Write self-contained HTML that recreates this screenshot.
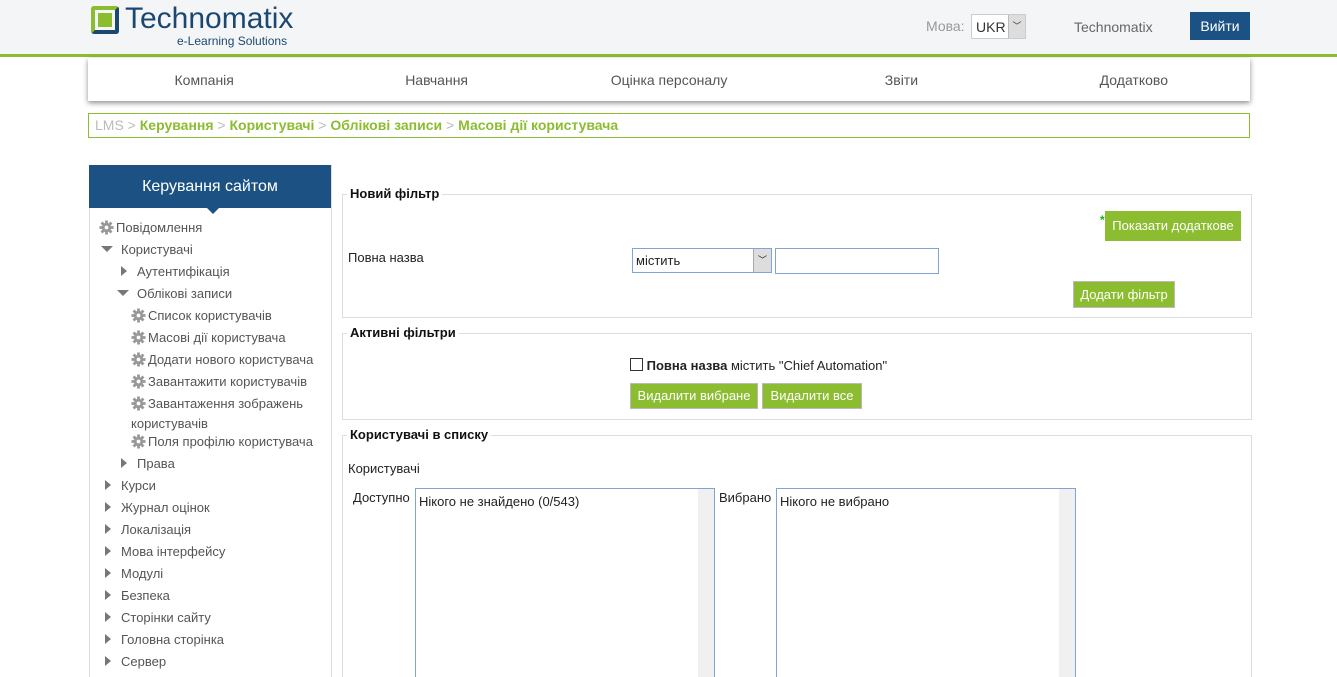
<!DOCTYPE html>
<html><head><meta charset="utf-8"><style>
*{box-sizing:border-box;margin:0;padding:0}
html,body{width:1337px;height:677px;overflow:hidden}
body{background:#fff;font-family:"Liberation Sans",Arial,sans-serif;font-size:13px;color:#222;position:relative}
.a{position:absolute}
.hdr{left:0;top:0;width:1337px;background:#f4f5f7;border-bottom:3px solid #8cbd31;height:57px}
.nav{left:88px;top:58px;width:1162px;height:43px;background:#fff;box-shadow:0 2px 5px rgba(0,0,0,.45);display:flex;align-items:center;font-size:14px;color:#555}
.nav span{flex:1;text-align:center}
.bc{left:88px;top:113px;width:1162px;height:25px;border:1px solid #8cbd31;padding:3px 6px;font-size:14px;color:#bbb}
.bc b{color:#8cbd31}
.side{left:89px;top:165px;width:243px;height:520px;border:1px solid #ddd}
.sh{left:89px;top:165px;width:242px;height:43px;background:#1b5283;color:#fff;font-size:16px;text-align:center;line-height:43px}
.sh:after{content:"";position:absolute;left:118px;bottom:-6px;border:6px solid transparent;border-top-color:#1b5283;border-bottom:0}
.it{position:absolute;font-size:13px;color:#555;white-space:nowrap}
.g{display:inline-block;width:15px;height:15px;vertical-align:-3px;margin-right:2px}
.tr{display:inline-block;width:0;height:0;border-left:6px solid #777;border-top:5px solid transparent;border-bottom:5px solid transparent;margin-right:10px}
.td{display:inline-block;width:0;height:0;border-top:6px solid #777;border-left:6px solid transparent;border-right:6px solid transparent;margin-right:8px;vertical-align:2px}
.fs{border:1px solid #ddd;left:342px;width:910px}
.lg{position:absolute;top:-9px;left:4px;background:#fff;padding:0 3px;font-weight:bold;font-size:13px;color:#111}
.btn{position:absolute;background:#8cbd31;color:#fff;font-size:13px;border:1px solid #bbb;text-align:center}
.lb{border:1px solid #7ea5d6;background:#fff;padding:5px 3px;font-size:13px}
.sb{position:absolute;right:0;top:0;width:16px;bottom:0;background:#f0f0f0}
</style></head><body>
<svg width="0" height="0" style="position:absolute"><defs><symbol id="gear" viewBox="0 0 16 16"><g fill="#999"><circle cx="8" cy="8" r="5"/><rect x="6.5" y="0.5" width="3" height="15"/><rect x="0.5" y="6.5" width="15" height="3"/><rect x="6.5" y="0.5" width="3" height="15" transform="rotate(45 8 8)"/><rect x="6.5" y="0.5" width="3" height="15" transform="rotate(-45 8 8)"/></g><circle cx="8" cy="8" r="2" fill="#fff"/></symbol></defs></svg>
<div class="a hdr"></div>
<div class="a" style="left:91px;top:6px;width:28px;height:28px;border:4px solid #1b4870;border-radius:3px;border-left-color:#8cbd31;border-top-color:#8cbd31"></div>
<div class="a" style="left:98px;top:13px;width:14px;height:14px;background:#8cbd31"></div>
<div class="a" style="left:125px;top:2px;font-size:30px;color:#1b4870">Technomatix</div>
<div class="a" style="left:177px;top:34px;font-size:12px;color:#1b4870">e-Learning Solutions</div>
<div class="a" style="left:926px;top:18px;font-size:14px;color:#999">Мова:</div>
<div class="a" style="left:971px;top:14px;width:55px;height:25px;border:1px solid #ccc;background:#fff;font-size:14px;padding:4px 4px;color:#333">UKR<span style="position:absolute;right:0;top:0;width:17px;height:23px;background:#ddd;border-left:1px solid #bbb;font-size:9px;text-align:center;line-height:22px">﹀</span></div>
<div class="a" style="left:1074px;top:19px;font-size:14px;color:#666">Technomatix</div>
<div class="a" style="left:1190px;top:12px;width:60px;height:28px;background:#1b5283;color:#fff;font-size:14px;text-align:center;line-height:28px">Вийти</div>
<div class="a nav"><span>Компанія</span><span>Навчання</span><span>Оцінка персоналу</span><span>Звіти</span><span>Додатково</span></div>
<div class="a bc">LMS &gt; <b>Керування</b> &gt; <b>Користувачі</b> &gt; <b>Облікові записи</b> &gt; <b>Масові дії користувача</b></div>
<div class="a side"></div>
<div class="a sh">Керування сайтом</div>
<div class="it" style="left:99px;top:220px"><svg class="g"><use href="#gear"/></svg>Повідомлення</div>
<div class="it" style="left:101px;top:242px"><span class="td"></span>Користувачі</div>
<div class="it" style="left:121px;top:264px"><span class="tr"></span>Аутентифікація</div>
<div class="it" style="left:117px;top:286px"><span class="td"></span>Облікові записи</div>
<div class="it" style="left:131px;top:308px"><svg class="g"><use href="#gear"/></svg>Список користувачів</div>
<div class="it" style="left:131px;top:330px"><svg class="g"><use href="#gear"/></svg>Масові дії користувача</div>
<div class="it" style="left:131px;top:352px"><svg class="g"><use href="#gear"/></svg>Додати нового користувача</div>
<div class="it" style="left:131px;top:374px"><svg class="g"><use href="#gear"/></svg>Завантажити користувачів</div>
<div class="it" style="left:131px;top:396px"><svg class="g"><use href="#gear"/></svg>Завантаження зображень</div>
<div class="it" style="left:131px;top:416px">користувачів</div>
<div class="it" style="left:131px;top:434px"><svg class="g"><use href="#gear"/></svg>Поля профілю користувача</div>
<div class="it" style="left:121px;top:456px"><span class="tr"></span>Права</div>
<div class="it" style="left:105px;top:478px"><span class="tr"></span>Курси</div>
<div class="it" style="left:105px;top:500px"><span class="tr"></span>Журнал оцінок</div>
<div class="it" style="left:105px;top:522px"><span class="tr"></span>Локалізація</div>
<div class="it" style="left:105px;top:544px"><span class="tr"></span>Мова інтерфейсу</div>
<div class="it" style="left:105px;top:566px"><span class="tr"></span>Модулі</div>
<div class="it" style="left:105px;top:588px"><span class="tr"></span>Безпека</div>
<div class="it" style="left:105px;top:610px"><span class="tr"></span>Сторінки сайту</div>
<div class="it" style="left:105px;top:632px"><span class="tr"></span>Головна сторінка</div>
<div class="it" style="left:105px;top:654px"><span class="tr"></span>Сервер</div>

<div class="a fs" style="top:194px;height:124px"><span class="lg">Новий фільтр</span></div>
<div class="a" style="left:1100px;top:213px;color:#2a2;font-size:12px;font-weight:bold">*</div>
<div class="btn" style="left:1105px;top:211px;width:136px;height:30px;line-height:29px;border:0">Показати додаткове</div>
<div class="a" style="left:348px;top:250px">Повна назва</div>
<div class="a lb" style="left:632px;top:248px;width:140px;height:25px;padding:4px 3px">містить<span style="position:absolute;right:0;top:0;width:18px;height:23px;background:#ddd;border-left:1px solid #aaa;font-size:9px;text-align:center;line-height:22px">﹀</span></div>
<div class="a lb" style="left:775px;top:248px;width:164px;height:26px"></div>
<div class="btn" style="left:1073px;top:281px;width:102px;height:27px;line-height:25px">Додати фільтр</div>

<div class="a fs" style="top:333px;height:87px"><span class="lg">Активні фільтри</span></div>
<div class="a" style="left:630px;top:358px;font-size:13px"><span style="display:inline-block;width:13px;height:13px;border:1px solid #333;vertical-align:-1px"></span> <b>Повна назва</b> містить "Chief Automation"</div>
<div class="btn" style="left:630px;top:383px;width:128px;height:26px;line-height:24px">Видалити вибране</div>
<div class="btn" style="left:762px;top:383px;width:100px;height:26px;line-height:24px">Видалити все</div>

<div class="a fs" style="top:435px;height:260px"><span class="lg">Користувачі в списку</span></div>
<div class="a" style="left:348px;top:461px">Користувачі</div>
<div class="a" style="left:353px;top:490px">Доступно</div>
<div class="a lb" style="left:415px;top:488px;width:300px;height:200px">Нікого не знайдено (0/543)<div class="sb"></div></div>
<div class="a" style="left:719px;top:490px">Вибрано</div>
<div class="a lb" style="left:776px;top:488px;width:300px;height:200px">Нікого не вибрано<div class="sb"></div></div>
</body></html>
